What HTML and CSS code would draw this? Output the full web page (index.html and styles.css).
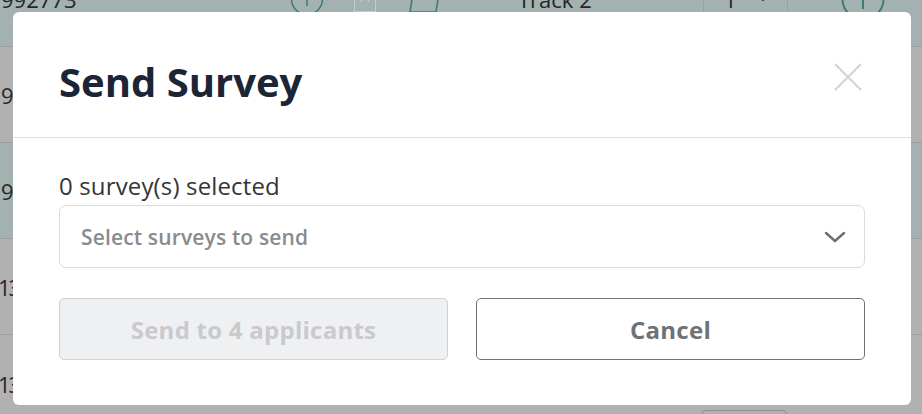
FILE: index.html
```html
<!DOCTYPE html>
<html lang="en">
<head>
<meta charset="utf-8">
<title>Send Survey</title>
<link rel="stylesheet" href="styles.css">
</head>
<body>
<div class="table" aria-hidden="true">
  <div class="row row-teal row-first">
    <span class="cell-id">992773</span>
    <span class="cell-add">
      <svg width="34" height="34" viewBox="0 0 34 34"><circle cx="17" cy="17" r="15.5" fill="none" stroke="#3f7a78" stroke-width="1.5"/><path d="M17 10v14M10 17h14" stroke="#3f7a78" stroke-width="1.5"/></svg>
    </span>
    <span class="cell-a">A</span>
    <span class="cell-shape">
      <svg width="34" height="30" viewBox="0 0 34 30"><path d="M6 2h26l-4 26H2z" fill="none" stroke="#3f7a78" stroke-width="1.6" stroke-linejoin="round"/></svg>
    </span>
    <span class="cell-track">Track 2</span>
    <span class="cell-select"><span class="num">1</span><span class="car">&#8964;</span></span>
    <span class="cell-info">
      <svg width="44" height="44" viewBox="0 0 44 44"><circle cx="22" cy="22" r="20.5" fill="none" stroke="#3f7a78" stroke-width="2"/><path d="M22 14v18" stroke="#3f7a78" stroke-width="2"/></svg>
    </span>
  </div>
  <div class="row row-gray"><span class="cell-id">9</span></div>
  <div class="row row-teal"><span class="cell-id">9</span></div>
  <div class="row row-gray"><span class="cell-id cell-narrow">13</span></div>
  <div class="row row-gray row-last"><span class="cell-id cell-narrow">13</span><span class="spacer"></span><span class="mini-select"></span></div>
</div>

<div class="modal" role="dialog" aria-labelledby="modal-title">
  <div class="modal-header">
    <h1 id="modal-title" class="modal-title">Send Survey</h1>
    <button class="close" aria-label="Close">
      <svg width="28" height="28" viewBox="0 0 28 28"><path d="M1 1l26 26M27 1L1 27" stroke="#d2d3d4" stroke-width="2"/></svg>
    </button>
  </div>
  <div class="modal-body">
    <div class="label">0 survey(s) selected</div>
    <div class="select">
      <span class="placeholder">Select surveys to send</span>
      <svg class="chev" width="22" height="12" viewBox="0 0 22 12"><path d="M2 2l9 8 9-8" fill="none" stroke="#6b6e73" stroke-width="2.4" stroke-linecap="round" stroke-linejoin="round"/></svg>
    </div>
    <div class="actions">
      <button class="btn btn-send" disabled>Send to 4 applicants</button>
      <button class="btn btn-cancel">Cancel</button>
    </div>
  </div>
</div>
</body>
</html>
```
FILE: styles.css
```css
* { box-sizing: border-box; }
html, body { margin: 0; padding: 0; }
body {
  width: 922px;
  height: 414px;
  overflow: hidden;
  position: relative;
  font-family: "Open Sans", Lato, sans-serif;
  background: #b1b1b1;
}

.table {
  margin-top: -48px;
}
.row {
  height: 96px;
  display: flex;
  align-items: center;
  border-bottom: 1px solid #9d9d9d;
  color: #262626;
  font-size: 22px;
}
.row-teal { background: #a3b1b0; }
.row-gray { background: #b1b1b1; }
.row-first { height: 95px; }
.row-last { align-items: flex-start; border-bottom: none; }
.row-last .cell-id { margin-top: 34px; }

.cell-id { width: 290px; padding-left: 1px; }
.cell-narrow { letter-spacing: -2px; margin-left: -3px; }
.cell-add { width: 64px; display: flex; }
.cell-a {
  width: 22px; height: 26px;
  border: 1px solid #c4cccb;
  color: #c4cccb;
  font-size: 14px;
  text-align: center;
  margin-right: 32px;
}
.cell-shape { width: 110px; display: flex; }
.cell-track { width: 185px; }
.cell-select {
  width: 85px; height: 36px;
  border-left: 1px solid #95a1a0;
  border-right: 1px solid #95a1a0;
  display: flex; align-items: center; gap: 20px;
  padding-left: 20px;
}
.cell-select .car { font-size: 14px; margin-top: -8px; }
.cell-info { margin-left: 53px; display: flex; }

.spacer { width: 415px; }
.mini-select {
  margin-top: 75px;
  width: 85px; height: 30px;
  border: 1px solid #8f8f8f;
  border-radius: 4px;
  background: #b1b1b1;
}

.modal {
  position: absolute;
  left: 13px;
  top: 12px;
  width: 898px;
  height: 393px;
  background: #fff;
  border-radius: 6px;
}

.modal-header {
  display: flex;
  justify-content: space-between;
  align-items: flex-start;
  padding: 46px 49px 31px 46px;
  border-bottom: 1px solid #dedede;
}
.modal-title {
  margin: 0;
  font-size: 40px;
  line-height: 48px;
  font-weight: 700;
  color: #1b2536;
}
.close {
  margin-top: 5px;
  padding: 0;
  border: 0;
  background: none;
  width: 28px; height: 28px;
  display: flex;
}

.modal-body {
  padding: 35px 46px 45px 46px;
}
.label {
  font-size: 24px;
  line-height: 26px;
  letter-spacing: 0.15px;
  color: #353535;
}
.select {
  margin-top: 6px;
  height: 63px;
  border: 1px solid #dcdcdc;
  border-radius: 7px;
  display: flex;
  align-items: center;
  justify-content: space-between;
  padding: 0 18px 0 21px;
}
.placeholder {
  font-size: 21px;
  font-weight: 600;
  letter-spacing: 0.15px;
  color: #8a8b8d;
}
.actions {
  margin-top: 30px;
  display: flex;
  gap: 28px;
}
.btn {
  flex: 1;
  height: 62px;
  border-radius: 5px;
  font-family: inherit;
  font-size: 24px;
  font-weight: 700;
  letter-spacing: 0.25px;
}
.btn-send {
  background: #eff0f2;
  border: 1px solid #d0d1d3;
  color: #c9cacd;
}
.btn-cancel {
  background: #fff;
  border: 1px solid #6c717a;
  color: #6c717a;
}
```
